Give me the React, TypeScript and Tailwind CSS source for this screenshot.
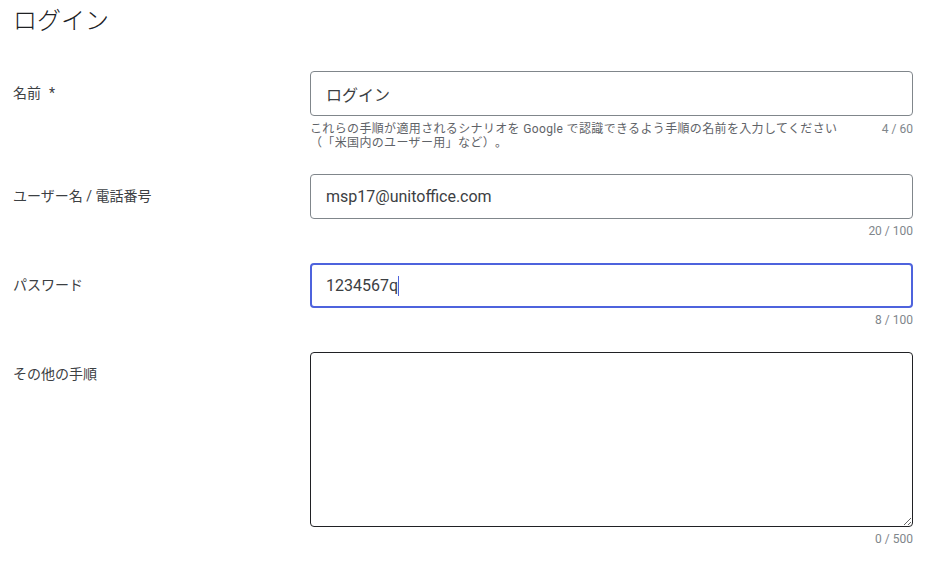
const font = "font-['Roboto','Noto_Sans_CJK_JP',sans-serif]";

function Row({
  label,
  children,
}: {
  label: React.ReactNode;
  children: React.ReactNode;
}) {
  return (
    <div className="flex mb-[24px]">
      <div className="w-[297px] shrink-0 pt-[12px] text-[14px] leading-[20px] text-[#3c4043]">
        {label}
      </div>
      <div className="w-[603px]">{children}</div>
    </div>
  );
}

function Counter({ text }: { text: string }) {
  return (
    <div className="mt-[4px] text-right text-[12px] leading-[16px] text-[#80868b]">
      {text}
    </div>
  );
}

export default function App() {
  return (
    <div className={`${font} bg-white w-[952px] h-[565px] px-[13px] overflow-hidden [text-spacing-trim:space-all]`}>
      <h1 className="pt-[5px] text-[24px] leading-[32px] font-light text-[#202124] mb-[34px]">
        ログイン
      </h1>

      <Row
        label={
          <>
            名前<span className="ml-[8px]">*</span>
          </>
        }
      >
        <input
          defaultValue="ログイン"
          className="w-full h-[45px] px-[15px] border border-[#80868b] rounded-[4px] text-[16px] text-[#3c4043] outline-none"
        />
        <div className="mt-[6px] flex justify-between text-[12px] leading-[14px] text-[#5f6368]">
          <p className="tracking-[0.35px]">
            これらの手順が適用されるシナリオを Google で認識できるよう手順の名前を入力してください
            <br />
            （「米国内のユーザー用」など）。
          </p>
          <span className="text-[#80868b] tracking-normal">4 / 60</span>
        </div>
      </Row>

      <Row label="ユーザー名 / 電話番号">
        <input
          defaultValue="msp17@unitoffice.com"
          className="w-full h-[45px] px-[15px] border border-[#80868b] rounded-[4px] text-[16px] text-[#3c4043] outline-none"
        />
        <Counter text="20 / 100" />
      </Row>

      <Row label="パスワード">
        <div className="w-full h-[45px] px-[14px] border-2 border-[#4e63dd] rounded-[4px] text-[16px] text-[#3c4043] flex items-center">
          <span>1234567q</span>
          <span className="w-px h-[20px] bg-[#4e63dd]" />
        </div>
        <Counter text="8 / 100" />
      </Row>

      <Row label="その他の手順">
        <textarea className="block w-full h-[175px] px-[15px] py-[12px] border border-[#202124] rounded-[4px] text-[16px] outline-none" />
        <Counter text="0 / 500" />
      </Row>
    </div>
  );
}
